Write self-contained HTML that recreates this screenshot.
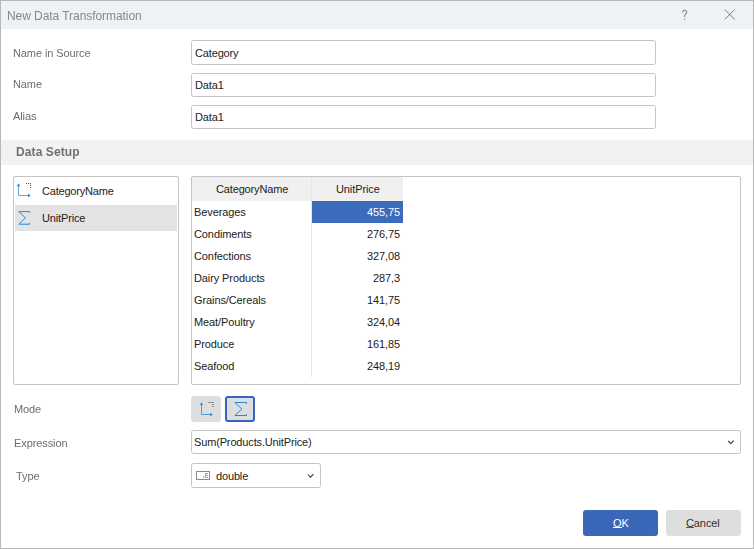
<!DOCTYPE html>
<html><head><meta charset="utf-8">
<style>
*{box-sizing:border-box;margin:0;padding:0}
html,body{width:754px;height:549px;overflow:hidden;background:#fff}
body{font-family:"Liberation Sans",sans-serif;font-size:11px;color:#222;position:relative}
.abs{position:absolute}
#win{position:absolute;left:0;top:0;width:754px;height:549px;border:1px solid #b8b8b8;background:#fff}
#title{position:absolute;left:0;top:0;width:752px;height:28px;background:#eff2f5}
#title .t{will-change:transform;position:absolute;left:6px;top:8px;font-size:12px;letter-spacing:-0.06px;color:#878787;white-space:nowrap}
.lbl{will-change:transform;position:absolute;color:#6e6e6e;font-size:11px;letter-spacing:-0.1px;white-space:nowrap}
.inp{position:absolute;border:1px solid #c4c4c4;border-radius:2.5px;background:#fff}
.inp span{position:absolute;left:3px;top:6px;white-space:nowrap;letter-spacing:-0.15px}
#band{position:absolute;left:0;top:139px;width:752px;height:25px;background:#f2f2f2}
#band span{will-change:transform;position:absolute;left:14.5px;top:5px;font-weight:bold;font-size:12px;letter-spacing:0.1px;color:#707070;white-space:nowrap}
.box{position:absolute;border:1px solid #c4c4c4;border-radius:2px;background:#fff}
.cell{position:absolute;white-space:nowrap;letter-spacing:-0.1px}
.btn{position:absolute;border-radius:2px}
</style></head><body>
<div id="win">
  <div id="title"><span class="t">New Data Transformation</span>
    <svg class="abs" style="left:680px;top:7.5px" width="8" height="12" viewBox="0 0 8 12"><path d="M1.6 3.4C1.6 2 2.5 1.2 3.6 1.2S5.7 2 5.7 3.2C5.7 4.7 3.7 5.1 3.7 7V8" fill="none" stroke="#858585" stroke-width="1.1"/><rect x="3.1" y="9.7" width="1.2" height="1.3" fill="#858585"/></svg>
    <svg class="abs" style="left:722px;top:8px" width="13" height="13" viewBox="0 0 13 13"><path d="M1.8 0.6L11.6 10.4M11.6 0.6L1.8 10.4" stroke="#7c7c7c" stroke-width="1"/></svg>
  </div>

  <span class="lbl" style="left:12px;top:46px">Name in Source</span>
  <div class="inp" style="left:190px;top:39px;width:465px;height:25px"><span>Category</span></div>
  <span class="lbl" style="left:12px;top:77px">Name</span>
  <div class="inp" style="left:190px;top:72px;width:465px;height:24px"><span style="top:5px">Data1</span></div>
  <span class="lbl" style="left:12px;top:109px">Alias</span>
  <div class="inp" style="left:190px;top:104px;width:465px;height:24px"><span style="top:5px">Data1</span></div>

  <div id="band"><span>Data Setup</span></div>

  <div class="box" style="left:12px;top:175px;width:166px;height:209px">
    <div class="abs" style="left:1px;top:28px;width:162px;height:26px;background:#e3e3e3"></div>
    <svg class="abs" style="left:0;top:3px" width="20" height="20" viewBox="0 0 20 20">
      <path d="M4.5 5.5V15.5H14.2" fill="none" stroke="#5ea8e2" stroke-width="1"/>
      <path d="M2.8 6.2L4.5 3.3L6.2 6.2Z M14 13.6L16.6 15.5L14 17.4Z" fill="#2b8ad8"/>
      <path d="M12 3h1v1h-1zM14 3h1v1h-1zM16 3h1v1h-1zM16 5h1v1h-1zM16 7h1v1h-1z" fill="#555"/>
    </svg>
    <span class="cell" style="left:28px;top:7.5px;letter-spacing:-0.2px">CategoryName</span>
    <svg class="abs" style="left:0;top:30px" width="20" height="20" viewBox="0 0 20 20">
      <path d="M15.7 5.9V4.6H4.8L11.5 10.9L4.8 17.2H15.7V15.9" fill="none" stroke="#2889d7" stroke-width="1"/>
    </svg>
    <span class="cell" style="left:28px;top:35px;letter-spacing:-0.15px">UnitPrice</span>
  </div>

  <div class="box" style="left:190px;top:175px;width:550px;height:209px">
    <div class="abs" style="left:0;top:0;width:211px;height:24px;background:#f0f0f0"></div>
    <div class="abs" style="left:119px;top:0;width:1px;height:200px;background:#e6e6e6"></div>
    <div class="abs" style="left:120px;top:24px;width:91px;height:22px;background:#3d6bbb"></div>
    <span class="cell" style="left:24px;top:6px;letter-spacing:-0.15px">CategoryName</span>
    <span class="cell" style="left:144px;top:6px">UnitPrice</span>
    <span class="cell" style="left:2px;top:29px">Beverages</span>
    <span class="cell" style="right:340px;top:29px;color:#fff">455,75</span>
    <span class="cell" style="left:2px;top:51px">Condiments</span>
    <span class="cell" style="right:340px;top:51px">276,75</span>
    <span class="cell" style="left:2px;top:73px">Confections</span>
    <span class="cell" style="right:340px;top:73px">327,08</span>
    <span class="cell" style="left:2px;top:95px">Dairy Products</span>
    <span class="cell" style="right:340px;top:95px">287,3</span>
    <span class="cell" style="left:2px;top:117px">Grains/Cereals</span>
    <span class="cell" style="right:340px;top:117px">141,75</span>
    <span class="cell" style="left:2px;top:139px">Meat/Poultry</span>
    <span class="cell" style="right:340px;top:139px">324,04</span>
    <span class="cell" style="left:2px;top:161px">Produce</span>
    <span class="cell" style="right:340px;top:161px">161,85</span>
    <span class="cell" style="left:2px;top:183px">Seafood</span>
    <span class="cell" style="right:340px;top:183px">248,19</span>
  </div>

  <span class="lbl" style="left:13px;top:402px">Mode</span>
  <div class="btn" style="left:190px;top:395px;width:30px;height:26px;background:#dedede;border-radius:3px"></div>
  <svg class="abs" style="left:194px;top:397px" width="24" height="22" viewBox="0 0 24 22">
    <path d="M6.5 6.6V16.5H15.2" fill="none" stroke="#4b9de0" stroke-width="1"/>
    <path d="M4.8 7L6.5 4.2L8.2 7Z M15 14.8L17.9 16.5L15 18.2Z" fill="#2a8ad8"/>
    <path d="M13 4h6v1h-6zM17 6h2v1h-2zM17 8h2v1h-2z" fill="#8e8e8e"/>
  </svg>
  <div class="btn" style="left:224px;top:395px;width:30px;height:26px;background:#dedede;border:2px solid #3565c0;border-radius:3px"></div>
  <svg class="abs" style="left:223px;top:394px" width="32" height="28" viewBox="0 0 32 28">
    <path d="M22.5 9V7.5H10.8L17.9 14L10.8 20.5H22.5V19" fill="none" stroke="#2889d7" stroke-width="1"/>
  </svg>

  <span class="lbl" style="left:13px;top:436px">Expression</span>
  <div class="inp" style="left:190px;top:429px;width:550px;height:24px"><span style="left:2px;top:5px">Sum(Products.UnitPrice)</span></div>
  <svg class="abs" style="left:715px;top:427px" width="30" height="28" viewBox="0 0 30 28">
    <path d="M12 12.8L14.8 15.5L17.8 12.6" fill="none" stroke="#383838" stroke-width="1.05"/>
  </svg>
  <span class="lbl" style="left:15px;top:469px">Type</span>
  <div class="inp" style="left:190px;top:462px;width:130px;height:25px"><span style="left:24px">double</span></div>
  <svg class="abs" style="left:192px;top:465px" width="20" height="18" viewBox="0 0 20 18">
    <rect x="3.5" y="5.5" width="13" height="8" fill="#fff" stroke="#8a8a8a" stroke-width="1"/>
    <path d="M10 10h1v2h-1zM12 7h1v5h-1zM12 7h3v1h-3zM12 9h3v1h-3zM12 11h3v1h-3z" fill="#4a9de0" fill-opacity="0.8"/>
  </svg>
  <svg class="abs" style="left:295px;top:464px" width="30" height="24" viewBox="0 0 30 24">
    <path d="M11.8 9.5L14.5 12.2L17.5 9.2" fill="none" stroke="#383838" stroke-width="1.05"/>
  </svg>

  <div class="btn" style="left:582px;top:509px;width:75px;height:26px;background:#3b67b8;border-radius:3px"></div>
  <span class="cell" style="left:612px;top:516px;color:#fff">OK</span>
  <div class="abs" style="left:612px;top:526px;width:9px;height:1px;background:#fff"></div>
  <div class="btn" style="left:665px;top:509px;width:75px;height:26px;background:#dedede;border-radius:3px"></div>
  <span class="cell" style="left:685px;top:516px;color:#333">Cancel</span>
  <div class="abs" style="left:685px;top:526px;width:8px;height:1px;background:#555"></div>
</div>
</body></html>
